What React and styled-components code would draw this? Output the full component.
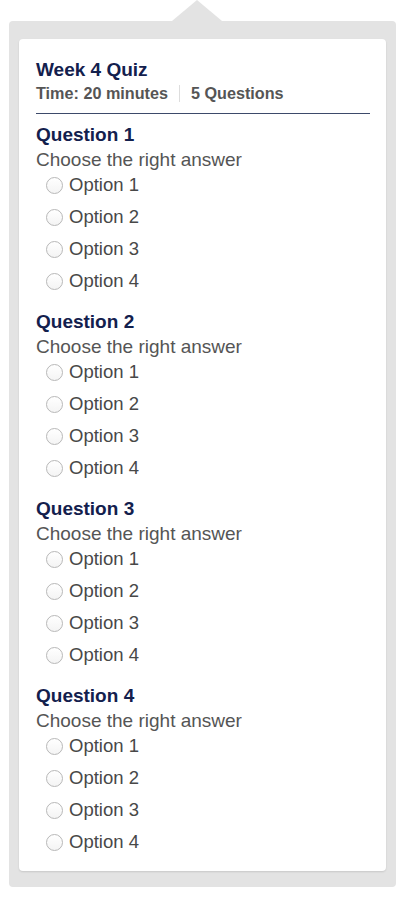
import React from 'react';
import styled, { createGlobalStyle } from 'styled-components';

const GlobalStyle = createGlobalStyle`
  body {
    margin: 0;
    background: #ffffff;
    font-family: "Liberation Sans", Arial, sans-serif;
  }
`;

const Page = styled.div`
  padding: 21px 6px 13px 9px;
`;

const Popover = styled.div`
  position: relative;
  background: #e3e3e3;
  border-radius: 4px;
  padding: 18px 10px 16px 10px;
`;

const Arrow = styled.div`
  position: absolute;
  top: -21px;
  left: 163px;
  width: 0;
  height: 0;
  border-left: 25px solid transparent;
  border-right: 25px solid transparent;
  border-bottom: 21px solid #e3e3e3;
`;

const Card = styled.div`
  background: #ffffff;
  border-radius: 4px;
  box-shadow: 0 1px 2px rgba(0, 0, 0, 0.12);
  padding: 21px 16px 13px 17px;
`;

const Header = styled.div`
  border-bottom: 1px solid #3d4a6a;
  padding-bottom: 10px;
`;

const Title = styled.div`
  font-size: 19px;
  font-weight: bold;
  line-height: 20px;
  color: #13204d;
`;

const Meta = styled.div`
  display: flex;
  align-items: center;
  margin-top: 3px;
  font-size: 16.2px;
  font-weight: bold;
  line-height: 20px;
  color: #555555;
`;

const MetaDivider = styled.span`
  width: 1px;
  height: 17px;
  background: #dddddd;
  margin: 0 11px 0 11px;
`;

const Question = styled.section`
  margin-top: ${p => (p.$first ? '10px' : '14px')};
`;

const QuestionTitle = styled.div`
  font-size: 19px;
  font-weight: bold;
  line-height: 22px;
  color: #13204d;
`;

const Prompt = styled.div`
  margin-top: 4px;
  font-size: 19px;
  line-height: 20px;
  color: #555555;
`;

const Options = styled.div`
  margin-top: -1px;
  padding-left: 10px;
`;

const OptionRow = styled.label`
  display: flex;
  align-items: center;
  height: 32px;
  font-size: 18.5px;
  color: #484848;
`;

const Radio = styled.span`
  box-sizing: border-box;
  width: 17px;
  height: 17px;
  border-radius: 50%;
  border: 1px solid #b8b8b8;
  background: linear-gradient(#ffffff, #f4f4f4);
  margin-right: 6px;
  flex-shrink: 0;
`;

const questions = [1, 2, 3, 4];
const options = [1, 2, 3, 4];

export default function App() {
  return (
    <>
      <GlobalStyle />
      <Page>
        <Popover>
          <Arrow />
          <Card>
            <Header>
              <Title>Week 4 Quiz</Title>
              <Meta>
                <span>Time: 20 minutes</span>
                <MetaDivider />
                <span>5 Questions</span>
              </Meta>
            </Header>
            {questions.map((q, i) => (
              <Question key={q} $first={i === 0}>
                <QuestionTitle>Question {q}</QuestionTitle>
                <Prompt>Choose the right answer</Prompt>
                <Options>
                  {options.map(o => (
                    <OptionRow key={o}>
                      <Radio />
                      Option {o}
                    </OptionRow>
                  ))}
                </Options>
              </Question>
            ))}
          </Card>
        </Popover>
      </Page>
    </>
  );
}
